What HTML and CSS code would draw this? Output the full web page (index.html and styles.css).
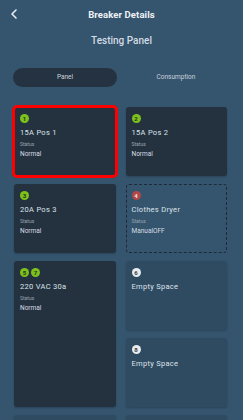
FILE: index.html
```html
<!DOCTYPE html>
<html>

<head lang="en">
    <meta charset="UTF-8">
    <title>Breaker Details</title>
    <link rel="stylesheet" href="styles.css">
</head>

<body>
    <div class="top">
        <svg class="back" width="8" height="10" viewBox="0 0 8 10">
            <path d="M6 1 L2 5 L6 9" fill="none" stroke="#e8eef4" stroke-width="1.6" stroke-linecap="round" stroke-linejoin="round" />
        </svg>
        <div class="title">Breaker Details</div>
    </div>
    <div class="panel-name">Testing Panel</div>

    <div class="tabs">
        <div class="tab active">Panel</div>
        <div class="tab">Consumption</div>
    </div>

    <div class="grid">
        <div class="card used selected">
            <div class="badges"><span class="badge green">1</span></div>
            <div class="name">15A Pos 1</div>
            <div class="label">Status</div>
            <div class="status">Normal</div>
        </div>
        <div class="card used">
            <div class="badges"><span class="badge green">2</span></div>
            <div class="name">15A Pos 2</div>
            <div class="label">Status</div>
            <div class="status">Normal</div>
        </div>
        <div class="card used">
            <div class="badges"><span class="badge green">3</span></div>
            <div class="name">20A Pos 3</div>
            <div class="label">Status</div>
            <div class="status">Normal</div>
        </div>
        <div class="card off">
            <div class="badges"><span class="badge red">4</span></div>
            <div class="name">Clothes Dryer</div>
            <div class="label">Status</div>
            <div class="status">ManualOFF</div>
        </div>
        <div class="card used tall">
            <div class="badges"><span class="badge green">5</span><span class="badge green">7</span></div>
            <div class="name">220 VAC 30a</div>
            <div class="label">Status</div>
            <div class="status">Normal</div>
        </div>
        <div class="card empty">
            <div class="badges"><span class="badge white">6</span></div>
            <div class="name">Empty Space</div>
        </div>
        <div class="card empty">
            <div class="badges"><span class="badge white">8</span></div>
            <div class="name">Empty Space</div>
        </div>
        <div class="card empty"></div>
        <div class="card empty"></div>
    </div>
</body>

</html>
```

FILE: styles.css
```css
html,
body {
    margin: 0;
    height: 420px;
    overflow: hidden;
}

body {
    background: #35546e;
    font-family: Roboto, "Liberation Sans", sans-serif;
    color: #dfe4ea;
}

.top {
    position: relative;
    height: 28px;
    display: flex;
    align-items: center;
    justify-content: center;
}

.back {
    position: absolute;
    left: 10px;
    top: 9px;
}

.title {
    font-size: 9.5px;
    font-weight: bold;
    color: #eef2f6;
    letter-spacing: 0.1px;
}

.panel-name {
    text-align: center;
    font-size: 10px;
    font-weight: 500;
    color: #d3dbe3;
    margin-top: 7px;
    height: 14px;
}

.tabs {
    display: flex;
    gap: 7px;
    margin: 19px 0 0 13px;
}

.tab {
    width: 104px;
    height: 19px;
    line-height: 19px;
    text-align: center;
    font-size: 6.5px;
    color: #c9d2db;
    border-radius: 10px;
}

.tab.active {
    background: #243241;
}

.grid {
    display: grid;
    grid-template-columns: 1fr 1fr;
    grid-auto-rows: 69px;
    gap: 8px 10px;
    padding: 20px 16px 0 14px;
}

.card {
    border-radius: 3px;
    padding: 7px 6px;
    box-sizing: border-box;
    box-shadow: 0 1px 2px rgba(0, 0, 0, .2);
}

.card.used {
    background: #243240;
}

.card.empty {
    background: #2f4b62;
}

.card.off {
    border: 1px dashed #1d2a37;
    padding: 6px 5px;
    box-shadow: none;
}

.card.tall {
    grid-row: span 2;
}

.card.selected {
    outline: 3px solid #ff0000;
    outline-offset: -1px;
}

.badges {
    display: flex;
    gap: 2px;
    height: 9px;
}

.badge {
    width: 9px;
    height: 9px;
    border-radius: 50%;
    font-size: 6px;
    font-weight: bold;
    line-height: 9px;
    text-align: center;
}

.badge.green {
    background: #7dc21c;
    color: #23331a;
}

.badge.red {
    background: #b04848;
    color: #f3e3e3;
}

.badge.white {
    background: #e9ebed;
    color: #2c3a48;
}

.name {
    font-size: 7.5px;
    margin-top: 5px;
    letter-spacing: 0.3px;
    color: #dde2e8;
}

.label {
    font-size: 5px;
    color: #9aa5b0;
    margin-top: 4px;
}

.status {
    font-size: 6.5px;
    color: #d6dce3;
    margin-top: 3px;
}
```
